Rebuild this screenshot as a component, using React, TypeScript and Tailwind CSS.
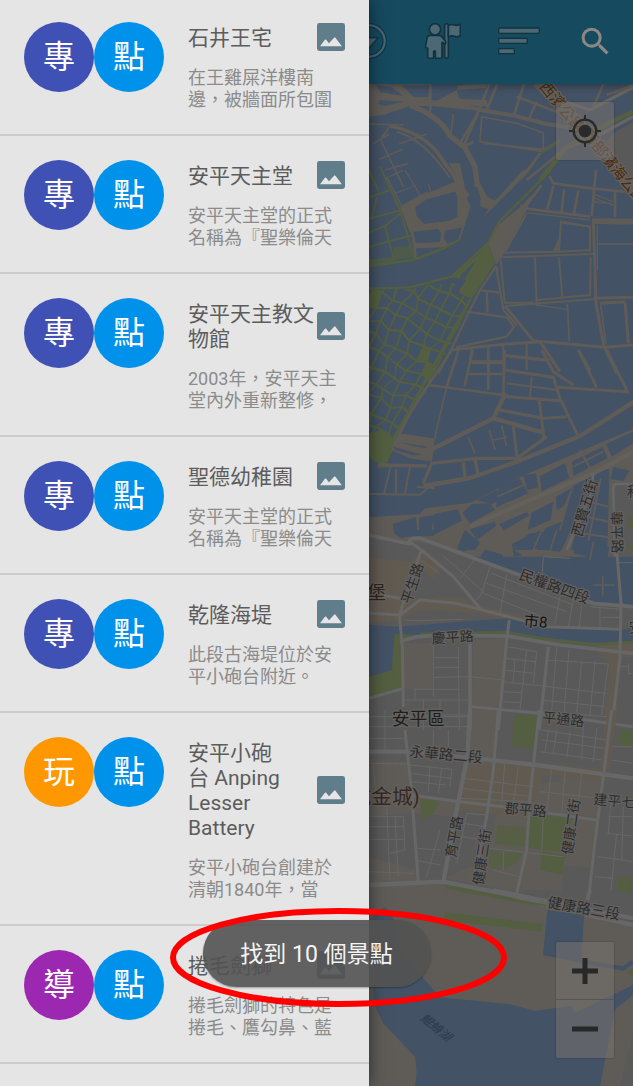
import React from "react";

type Place = {
  kind: string;
  color: string;
  title: string[];
  text: string[];
};

const INDIGO = "bg-[#3f51b5]";
const ORANGE = "bg-[#ff9800]";
const PURPLE = "bg-[#9c27b0]";

const places: Place[] = [
  { kind: "專", color: INDIGO, title: ["石井王宅"], text: ["在王雞屎洋樓南", "邊，被牆面所包圍"] },
  { kind: "專", color: INDIGO, title: ["安平天主堂"], text: ["安平天主堂的正式", "名稱為『聖樂倫天"] },
  { kind: "專", color: INDIGO, title: ["安平天主教文", "物館"], text: ["2003年，安平天主", "堂內外重新整修，"] },
  { kind: "專", color: INDIGO, title: ["聖德幼稚園"], text: ["安平天主堂的正式", "名稱為『聖樂倫天"] },
  { kind: "專", color: INDIGO, title: ["乾隆海堤"], text: ["此段古海堤位於安", "平小砲台附近。"] },
  { kind: "玩", color: ORANGE, title: ["安平小砲", "台 Anping", "Lesser", "Battery"], text: ["安平小砲台創建於", "清朝1840年，當"] },
  { kind: "導", color: PURPLE, title: ["捲毛劍獅"], text: ["捲毛劍獅的特色是", "捲毛、鷹勾鼻、藍"] },
];

function Badge({ label, color }: { label: string; color: string }) {
  return (
    <span className={`flex size-[70px] shrink-0 items-center justify-center rounded-full text-[32px] leading-none text-white ${color}`}>
      {label}
    </span>
  );
}

function PhotoIcon() {
  return (
    <svg viewBox="0 0 82 82" className="size-7 shrink-0" aria-hidden="true">
      <rect width="82" height="82" rx="7" fill="#607d8b" />
      <path d="M9 68 L23 49 Q25 47 27 49 L35 59 L50 43 Q52 41 54 43 L73 68Z" fill="#e5e5e5" />
    </svg>
  );
}

function PlaceRow({ place }: { place: Place }) {
  return (
    <li className="flex gap-6 border-b-2 border-[#cccccc] px-6 py-6 first:pt-[22px]">
      <div className="flex shrink-0">
        <Badge label={place.kind} color={place.color} />
        <Badge label="點" color="bg-[#0091ea]" />
      </div>
      <div className="min-w-0 flex-1 pt-px whitespace-nowrap">
        <div className="flex items-center justify-between">
          <h2 className="w-0 pt-[3px] text-[21px] leading-[25px] text-[#5c5c5c]">
            {place.title.map((line) => (
              <span key={line} className="block">{line}</span>
            ))}
          </h2>
          <PhotoIcon />
        </div>
        <p className="mt-4 -mb-px text-[18px] leading-[22px] text-[#8b8b8b]">
          {place.text.map((line) => (
            <span key={line} className="block">{line}</span>
          ))}
        </p>
      </div>
    </li>
  );
}

function Toolbar() {
  return (
    <header className="relative z-10 flex h-[84px] items-center justify-end gap-[37px] overflow-hidden bg-[#164a5f] pr-[19px] pb-0.5 shadow-[0_2px_8px_rgba(0,0,0,0.35)]">
      <button className="shrink-0" aria-label="方位">
        <svg viewBox="0 0 108 108" className="size-9">
          <circle cx="51" cy="54" r="47" fill="none" stroke="#10394a" strokeWidth="14" />
          <circle cx="51" cy="54" r="47" fill="none" stroke="#4b6874" strokeWidth="6" />
          <path d="M10 44 H79 L44 84Z" fill="#4b6874" stroke="#10394a" strokeWidth="5" />
        </svg>
      </button>
      <button className="shrink-0" aria-label="導覽">
        <svg viewBox="0 0 108 108" className="size-9">
          <g fill="#4b6874" stroke="#10333f" strokeWidth="5" strokeLinejoin="round">
            <path d="M59 8 Q59 2 64 2 Q70 2 70 8 V100 Q70 106 64 106 Q59 106 59 100Z" />
            <path d="M70 8 Q80 2 88 6 Q96 9 106 4 V38 Q96 44 88 40 Q80 37 70 42Z" />
            <path d="M14 37 H43 Q49 37 52 43 L61 55 Q64 60 60 63 L51 58 V101 Q51 106 46 106 H35 Q31 106 31 101 V84 H26 V101 Q26 106 21 106 H13 Q8 106 8 101 V76 L4 74 Q1 72 2 68 L6 45 Q8 37 14 37Z" />
            <circle cx="30" cy="19" r="17" />
          </g>
        </svg>
      </button>
      <button className="shrink-0" aria-label="排序">
        <svg viewBox="0 0 126 84" className="h-7 w-[42px]">
          <g fill="#4b6874" stroke="#10333f" strokeWidth="4">
            <rect x="2" y="3" width="122" height="16" rx="3" />
            <rect x="2" y="34" width="86" height="15" rx="3" />
            <rect x="2" y="65" width="47" height="15" rx="3" />
          </g>
        </svg>
      </button>
      <button className="shrink-0" aria-label="搜尋">
        <svg viewBox="0 0 24 24" className="size-[37px]" fill="#8a8785">
          <path d="M15.5 14h-.79l-.28-.27A6.471 6.471 0 0 0 16 9.5 6.5 6.5 0 1 0 9.5 16c1.61 0 3.09-.59 4.23-1.57l.27.28v.79l5 4.99L20.49 19l-4.99-5zm-6 0C7.01 14 5 11.99 5 9.5S7.01 5 9.5 5 14 7.01 14 9.5 11.99 14 9.5 14z" />
        </svg>
      </button>
    </header>
  );
}

const WATER = "#435265";
const LAND = "#5f5c58";
const CITY = "#595959";
const ROAD = "#676767";
const GREEN = "#535f40";
const TAN = "#615a51";

// Irregular fish ponds laid along the slanted embankment.
function pondCells(): string[] {
  const cells: string[] = [];
  const noise = (i: number, j: number) => {
    const v = Math.sin(i * 127.1 + j * 311.7) * 43758.5453;
    return v - Math.floor(v);
  };
  const corner = (i: number, j: number): [number, number] => {
    const a = i * 42 + noise(i, j) * 24;
    const b = j * 36 + noise(j + 40, i) * 20;
    return [330 - 0.46 * a - 0.87 * b, 860 + 0.87 * a - 0.42 * b];
  };
  for (let i = -2; i < 18; i++) {
    for (let j = -3; j < 15; j++) {
      if (noise(i + 9, j + 3) < 0.05) continue;
      const pts = [corner(i, j), corner(i + 1, j), corner(i + 1, j + 1), corner(i, j + 1)];
      const cx = pts.reduce((s, p) => s + p[0], 0) / 4;
      const cy = pts.reduce((s, p) => s + p[1], 0) / 4;
      cells.push(
        pts.map(([x, y]) => `${(cx + (x - cx) * 0.84).toFixed(1)},${(cy + (y - cy) * 0.84).toFixed(1)}`).join(" "),
      );
    }
  }
  return cells;
}

const cells = pondCells();

function Lines({ d, w, c = LAND }: { d: string; w: number; c?: string }) {
  return <path d={d} fill="none" stroke={c} strokeWidth={w} strokeLinejoin="round" />;
}

function Label({ x, y, r = 0, s = 42, c = "#2d2d2d", children }: { x: number; y: number; r?: number; s?: number; c?: string; children: string }) {
  return (
    <text
      x={x}
      y={y}
      transform={`rotate(${r} ${x} ${y})`}
      fontSize={s}
      fill={c}
      stroke="#646260"
      strokeWidth="7"
      strokeLinejoin="round"
      paintOrder="stroke"
      textAnchor="middle"
      dominantBaseline="central"
    >
      {children}
    </text>
  );
}

function CityMap() {
  return (
    <svg viewBox="27 252 792 3006" preserveAspectRatio="xMinYMin slice" className="absolute inset-0 size-full" role="img" aria-label="安平區地圖">
      <defs>
        <clipPath id="ponds">
          <path d="M27 868 L150 866 L275 838 L300 880 L335 897 L270 1040 L150 1240 L90 1370 L70 1410 L27 1370Z" />
        </clipPath>
      </defs>
      <rect x="27" y="252" width="792" height="3006" fill={WATER} />

      {/* northern ponds */}
      <g>
        <path d="M27 252 H215 V300 L330 310 L330 330 L215 318 L150 318 L70 345 L27 350Z" fill={LAND} />
        <path d="M50 256 L95 262 L130 288 L60 276Z M125 256 L208 256 L205 292 L160 290Z M60 300 L130 305 L75 318 L55 312Z" fill={WATER} />
        <path d="M292 256 L380 252 L378 264 L292 270Z M290 270 L298 296 L380 300 L385 320 L220 308Z" fill={LAND} />
        <Lines w={16} d="M150 316 Q240 350 268 405 L315 443 L345 500 L352 560" />
        <Lines w={12} d="M215 312 L330 322 L380 334 L460 346 L560 372 L625 382" />
        <Lines w={8} d="M212 318 L208 345 M310 440 L345 360 L388 252 M300 430 L350 345 M380 330 L412 252 M462 345 L492 252 M470 290 L590 335 M505 360 L530 305" />
        <Lines w={5} d="M273 400 L280 342 M27 372 L132 375 M90 378 L60 420 M38 432 L88 402 M58 478 L128 448 M75 510 L145 490 M118 432 L200 402 M62 420 L130 560 M365 350 L360 425 L550 455 L550 398 L470 370 Z M372 430 L550 448 M550 450 L600 420" />
        <Lines w={11} d="M90 378 Q180 395 230 455 L290 540 L325 590" />
        <Lines w={6} d="M110 395 Q190 415 275 540" />
        <Lines w={9} d="M340 425 L312 440" />
        <Lines w={14} c={GREEN} d="M819 335 L745 370 L620 442 L540 540" />
        <Lines w={6} c={GREEN} d="M600 425 L540 462 L478 535" />
        <Lines w={8} d="M819 350 L735 395 L610 450 L500 540 M540 460 L505 510" />
        <path d="M819 365 L760 400 L725 440 L819 560Z" fill={CITY} />
        <Lines w={34} d="M530 245 L620 330 L730 460 L830 590" />
        <Lines w={10} c="#686561" d="M600 300 L690 330 L819 262 M690 420 L819 350" />
        <Lines w={8} d="M700 322 L730 252 M740 285 L819 256" />
      </g>

      {/* river bend and large ponds */}
      <g transform="translate(0 510)">
        <path d="M120 110 L175 78 L290 20 L265 -20 L300 -20 L322 90 L332 108 L300 212 L165 270 L155 200Z" fill={LAND} />
        <path d="M165 112 L200 88 L285 65 L292 80 V140 L270 152 L192 162 L170 138Z M160 185 L235 177 L243 190 L240 216 L168 220Z M254 182 L307 172 L295 210 L262 222 L252 205Z M168 235 L255 232 L170 263Z M185 60 L205 68 L285 35 L275 20Z" fill={WATER} />
        <path d="M335 -6 L382 80 L405 92 L490 0 H512 L370 142 L385 118 L360 108 L362 85Z M484 108 L520 70 L500 120 L430 255 L408 285 L385 220 L415 165Z" fill={LAND} />
        <path d="M385 218 L405 280 L335 387 L290 372 L318 330 L275 320 L345 262Z" fill={GREEN} />
        <path d="M300 317 L347 273 L325 310 L306 332Z" fill={WATER} />
        <Lines w={7} c={GREEN} d="M572 0 L415 158 L385 218 L275 320 L150 352 L27 356 M27 288 L160 270 L250 236 L300 208" />
        <Lines w={6} c={GREEN} d="M60 -10 L120 120 L165 270 M27 82 L92 60 M27 145 L118 122 M27 188 L75 168 L122 130 M75 168 L102 272 M27 230 L155 196 M27 0 L55 62 M50 82 L35 150" />
        <Lines w={4} d="M88 20 L130 0 M105 70 L170 45 M135 0 L180 75 M80 20 L125 110 M205 40 L212 65" />
        <path d="M27 268 L100 262 L105 275 L27 286Z M100 232 L150 225 L160 262 L102 270Z" fill={GREEN} opacity="0.7" />
        <Lines w={8} d="M568 18 L580 40 L695 55 L819 68 M500 116 L690 140 M545 45 L498 108 M562 118 L580 48 M605 125 L612 58 M642 132 L655 62 M695 138 L708 0 M765 140 V65" />
        <Lines w={4} d="M702 72 L760 96 M702 84 L760 106 M702 96 L755 100 M480 105 L500 122 M500 128 L690 150 M610 160 L690 170 M710 222 H819 M712 300 V165 M530 405 L620 418" />
        <path d="M695 145 L819 146 V164 L700 162Z M595 205 L600 248 L578 246Z" fill={LAND} />
        <Lines w={6} d="M500 130 L434 248 L595 245 L692 240 M603 152 L597 245 M606 155 L690 170 V245 M418 262 L700 252 M422 268 L434 398 L520 398 M525 262 L530 408 M597 262 L607 382 M532 390 L690 375 L692 262 M436 408 L700 388" />
        <Lines w={9} d="M700 150 L708 400 L732 530 M700 385 L819 382 M435 408 L520 512 L735 532 L819 525 M795 395 L805 520 M720 400 L795 395" />
        <Lines w={5} d="M622 402 L628 514 M722 405 L738 520" />
        <Lines w={7} d="M408 288 L430 420 L470 465 M408 288 L360 360 L325 430 L278 530 L235 610 M360 360 L418 368 M380 362 L383 428 M320 425 L440 442 L462 470 L440 500 L288 532" />
        <Lines w={9} d="M270 540 L440 522 L540 515 L600 605 M655 540 L690 600 M735 535 L770 610" />
        <Lines w={6} d="M335 535 L325 600 M385 530 V600 M430 520 V600 M335 580 H430 M500 520 V600 M436 555 L575 570 M295 540 L275 600" />
      </g>

      {/* village ponds */}
      <g clipPath="url(#ponds)">
        <rect x="27" y="850" width="340" height="600" fill={GREEN} />
        {cells.map((points) => (
          <polygon key={points} points={points} fill={WATER} />
        ))}
        <path d="M335 890 L55 1400" stroke={GREEN} strokeWidth="9" fill="none" />
        <path d="M27 1300 L70 1290 L110 1330 L75 1400 L27 1370Z" fill={GREEN} />
      </g>

      {/* canal and south bank */}
      <g transform="translate(0 1050)">
        <path d="M118 250 L220 265 L222 300 L215 335 L150 325 L95 300 L100 275Z" fill={LAND} />
        <path d="M100 290 L190 315 L160 316 L105 300Z M110 276 L205 290 L190 294Z" fill={WATER} />
        <Lines w={8} d="M275 0 L205 105 L150 190 L118 252 M205 105 L430 135 L434 0 M338 0 L314 108 M385 0 V120 M325 72 H432 M327 35 H432 M290 20 L260 110" />
        <Lines w={5} d="M260 110 L218 290 M325 262 L345 310 M388 240 L405 300 M425 225 L440 290 M400 270 L440 262" />
        <Lines w={13} d="M212 300 L400 205 L437 130 M400 205 L550 248 M190 408 L330 384 L470 335 L660 258 L830 150" />
        <Lines w={10} d="M55 345 L200 348 M190 400 L215 340 L350 325 L470 325 L560 260 M55 350 L75 340 M345 325 L355 378 M310 338 L316 388" />
        <Lines w={6} d="M27 432 L180 434 L215 405 M92 350 L72 430 M108 358 V430 M150 350 L135 430 M170 410 L225 415" />
        <Lines w={9} d="M435 60 L580 82 L600 145 L655 260 M440 140 L600 152 M538 150 L552 265 M418 180 L550 205 L620 200 M592 112 L800 125 M545 0 L580 65 L640 105 M655 0 L710 112 M740 0 L805 130 M460 230 L472 330" />
        <Lines w={6} d="M440 100 L592 120 M515 80 L510 142 M434 18 L560 32 M500 0 V60" />
        <path d="M27 502 L180 492 L195 475 L330 458 L500 372 L690 292 L830 232 V620 H27Z" fill={LAND} />
        <g fill={WATER}>
          <path d="M350 450 L410 420 L428 450 L395 462Z M416 414 L478 385 L505 430 L408 472Z M490 376 L528 370 L535 412 L502 420Z M540 378 L615 340 L628 385 L545 424Z M636 335 L728 290 L742 325 L640 378Z M738 282 L819 245 V280 L755 320Z" />
          <path d="M308 490 L335 462 L390 460 L405 480 L330 520Z M222 492 L295 478 L305 512 L220 555Z M98 522 L168 502 L172 548 L125 565 L102 548Z M178 502 L225 496 L212 548 L176 555Z M330 538 L405 515 L408 528 L350 570Z M292 600 L315 540 L360 578 L345 600Z M515 488 L580 455 L572 510 L503 540Z M588 440 L635 415 L612 468 L590 482Z M418 522 L500 487 L508 496 L432 542Z" />
          <path d="M455 582 L545 540 L520 600 H460Z M555 535 L605 515 L575 600 H530Z M640 408 L705 372 L690 410 L605 600 H585Z M705 370 L748 356 L742 600 H632Z M760 350 L808 362 L790 392 L752 388Z" />
        </g>
        <Lines w={6} d="M722 385 L680 600 M690 455 L745 470 M680 500 L745 515 M665 550 L745 562 M660 300 L690 355 M640 350 L730 305 M412 440 L490 405" />
        <Lines w={13} c="#64615d" d="M330 530 L510 450 L700 370 L830 300" />
        <path d="M760 402 H830 V620 H750Z" fill={CITY} />
        <Lines w={8} c={ROAD} d="M830 402 H768 Q758 402 760 420 L765 620 M700 370 L690 440 L620 600" />
        <path d="M805 500 H819 V535 H805Z M805 580 H819 V600 H805Z" fill={GREEN} />
      </g>

      {/* city north of the canal */}
      <g transform="translate(0 1590)">
        <path d="M27 10 L150 35 L200 40 L470 130 L700 220 L830 230 V1700 H27Z" fill={CITY} />
        <g fill={WATER}>
          <path d="M100 8 L125 0 H228 L220 18 L150 20 L120 22Z M293 50 L312 5 L355 45 L310 65Z M375 58 L430 75 L420 105 L360 85Z M432 85 L470 105 L460 120 L425 108Z M458 58 L487 76 L462 80Z M470 40 L510 10 L600 0 H630 L600 65 L520 55Z M645 20 L748 52 L740 95 L640 70Z M645 85 L690 95 V180 L650 150Z M698 95 L752 105 L750 128 L698 125Z M698 138 L765 138 V203 L700 190Z" />
        </g>
        <Lines w={5} d="M545 0 L520 60 M590 0 L570 62 M700 35 L690 90 M728 138 V200 M698 165 H765" />
        <path d="M27 80 L150 95 L190 60 L248 95 L222 150 L182 118 L150 205 L300 200 L360 225 L500 262 V290 L360 250 L180 240 L120 270 L27 278Z M715 345 L830 338 V380 L785 385 L765 620 H730 L750 400 L715 372Z" fill={TAN} />
        <path d="M130 340 H220 L215 478 H132Z M340 330 L435 325 L425 530 L335 530Z M335 540 L410 550 L400 740 L320 720Z" fill={LAND} />
        <path d="M27 285 L120 290 L300 275 L450 265 L560 295 L780 300 L830 290 V338 L700 338 L560 325 L440 308 L110 315 L100 422 L27 442Z" fill={WATER} />
        <path d="M27 440 L95 420 L103 312 L190 316 L120 340 L130 472 L27 502Z" fill={GREEN} />
        <Lines w={9} c={GREEN} d="M180 312 L440 307 L560 328 L700 343 L819 337" />
        <Lines w={3} c={ROAD} d="M250 78 L370 185 L350 210 M300 145 L345 88 M390 110 L365 190 M440 135 L420 250 M395 130 L640 225 M380 160 L620 245 M370 190 L560 265 M480 135 L640 190 M550 80 L545 150 M550 80 L630 85 M600 200 L585 280 M640 205 L625 290 M665 225 L658 290 M720 230 V295 M690 230 L780 238 M725 262 H780 M240 130 L180 90 M130 270 L170 272 L310 268 M775 98 H819" />
        <Lines w={3} c={ROAD} d="M220 340 V500 M295 350 L298 600 M220 383 H298 M220 412 H298 M220 442 L330 440 L430 450 M160 478 H298 M135 510 H325 M190 510 V600 M240 510 V600 M130 555 H330 M165 480 V510 M440 350 L530 365 L520 460 M435 385 L525 395 M430 420 L520 430 M430 455 L740 490 M465 385 L460 455 M500 360 L480 540 M430 485 L485 488 M430 515 L480 518 M560 390 L745 402 M590 350 L575 545 M627 360 L612 550 M665 395 L650 548 M705 395 L690 555 M745 400 L725 555 M545 510 L735 530 M540 545 L740 560 M805 400 V430 H819 M780 410 H805" />
        <Lines w={11} c={ROAD} d="M27 15 L150 42 Q140 22 180 25 L470 132 L700 220 L819 230 M120 335 Q170 315 240 316 L440 318 L600 345 L819 370 M330 340 V600" />
        <Lines w={9} c={ROAD} d="M150 35 L190 65 L280 140 L360 235 M182 65 L118 255 L127 350 L130 530 M27 250 L120 255 L180 210 L290 220 L360 238 L560 290 L780 298 M448 270 L440 330 L415 600 M770 60 L783 220 L780 380 L755 600 M565 350 L538 600 M27 190 L120 205 M130 475 L27 505 M335 530 L540 550 L819 590" />
        <path d="M465 555 L538 560 L535 600 H460Z" fill={GREEN} />
      </g>

      {/* city centre */}
      <g transform="translate(0 2130)">
        <path d="M27 150 L145 155 L150 250 L300 275 L290 320 L150 310 L27 320Z M27 440 L170 480 L175 520 H27Z M340 0 H410 L400 140 H330Z M27 525 L250 515 L450 555 L560 590 L819 650 V1200 H27Z M410 300 L710 330 L690 470 L610 560 L470 545 L255 505 L330 470 L380 470Z M540 195 L725 200 L712 320 L515 300Z" fill={LAND} />
        <path d="M285 300 L310 180 L400 150 L720 175 L745 0 H772 L748 190 L735 210 L540 200 L525 295 L410 312Z" fill={TAN} />
        <path d="M545 197 L600 195 L600 215 L545 218Z M612 465 L690 475 L685 570 L605 560Z" fill={CITY} />
        <g fill={GREEN}>
          <path d="M465 15 L537 18 L527 120 L455 105Z M180 266 L235 272 Q230 318 185 328Z M510 312 L638 325 L598 425 L500 412Z M548 425 L615 435 L607 493 L540 480Z M780 60 H819 V110 L778 105Z M775 498 L815 503 V552 L772 547Z M255 525 L400 542 L560 580 L555 592 L260 537Z" />
          <path d="M415 345 L495 352 L493 412 L405 402Z M390 420 L487 430 Q460 490 385 472Z" opacity="0.75" />
        </g>
        <Lines w={3} c={ROAD} d="M27 85 H135 M27 50 H325 M27 20 H325 M75 0 V120 M220 60 V120 M265 60 V120 M27 160 L140 162 M150 165 L275 178 L270 230 M150 190 L275 205 M150 215 L260 225 M210 170 L205 245 M245 175 L235 250 M27 320 H130 L135 420 L90 430 M80 290 L90 510 M27 350 H130 M27 388 H130 M40 160 L50 290 M27 485 L165 490 M105 320 L115 500 M320 310 L380 315 M310 340 L375 350 M305 380 L370 390 M240 360 L200 500 M170 415 L240 420 M320 310 L290 460 M165 450 L240 465 M310 205 L520 230 M305 235 L515 260 M300 265 L510 275 M475 170 L460 285 M435 150 L425 280" />
        <Lines w={3} c={ROAD} d="M545 60 L740 90 M545 90 L735 115 M540 125 L725 150 M590 60 L580 130 M630 65 L620 140 M565 60 L555 125 M670 45 L665 150 M710 55 L700 155 M575 170 L560 310 M615 180 L605 320 M665 190 L650 320 M540 245 L720 265 M390 415 L610 440 M430 425 V480 M400 480 L475 500 M550 310 L545 420 M755 250 L745 370 M745 320 H819 M740 370 L819 378 M715 440 L819 455 M770 370 L750 570 M790 290 L785 450 M705 500 L760 505 M760 110 H819 M755 150 L819 160" />
        <Lines w={13} c={ROAD} d="M27 125 L140 125 L320 142 L530 165 L819 205 M330 0 L322 140 L290 300 L250 515" />
        <Lines w={9} c={ROAD} d="M135 60 L155 250 L175 515 M155 255 L300 275 L430 290 L710 330 M415 0 L400 180 L380 320 L340 520 M538 0 L510 260 L500 420 L470 550 M755 0 L730 200 L702 420 L685 575" />
        <Lines w={13} c={ROAD} d="M27 525 L250 515 L450 555 L570 590 L819 645" />
      </g>

      {/* lake */}
      <g transform="translate(0 2670)">
        <path d="M480 0 H819 V85 L560 32Z" fill={CITY} />
        <path d="M40 65 L78 52 L100 85 L120 180 L190 265 L240 322 L450 343 L525 362 L635 348 L645 368 L819 285 V315 L765 358 L720 588 H165 L170 545 L165 500 L70 400 L40 340Z" fill={WATER} />
        <path d="M562 60 L672 75 L664 220 L549 195Z" fill={WATER} />
        <Lines w={13} c={WATER} d="M662 215 L790 235 L819 215" />
        <path d="M819 430 L780 588 H819Z" fill={CITY} />
        <path d="M252 66 L548 102 L545 125 L255 90Z M803 245 L819 235 V265Z M772 0 H815 V12Z" fill={GREEN} />
        <Lines w={6} c={GREEN} d="M300 0 L560 47" />
        <Lines w={12} c={ROAD} d="M400 0 L570 35 L819 85 M690 0 L682 30" />
      </g>

      {/* place and street names */}
      <g>
        <Label x={606} y={322} r={51} s={46} c="#4b2b0e">西濱公路</Label>
        <Label x={762} y={500} r={51} s={46} c="#4b2b0e">西部濱海公路</Label>
        <Label x={674} y={1524} r={-74} s={44}>西賢五街</Label>
        <Label x={770} y={1597} r={88}>華平路</Label>
        <Label x={821} y={1472}>和</Label>
        <Label x={157} y={1750} r={-72}>平生路</Label>
        <Label x={50} y={1779} s={56} c="#2f241b">堡</Label>
        <Label x={583} y={1760} r={20} s={44}>民權路四段</Label>
        <Label x={527} y={1866} r={5} s={46} c="#141414">市8</Label>
        <Label x={278} y={1912} r={-4}>慶平路</Label>
        <Label x={175} y={2156} s={53} c="#211d19">安平區</Label>
        <Label x={610} y={2158} r={6}>平通路</Label>
        <Label x={827} y={1882}>安</Label>
        <Label x={258} y={2264} r={5} s={44}>永華路二段</Label>
        <Label x={34} y={2391} s={62} c="#38281d">(億載金城)</Label>
        <Label x={497} y={2430} r={5}>郡平路</Label>
        <Label x={282} y={2510} r={-80}>育平路</Label>
        <Label x={366} y={2571} r={-82}>健康三街</Label>
        <Label x={633} y={2480} r={-82}>健康二街</Label>
        <Label x={784} y={2405} r={5}>建平七街</Label>
        <Label x={671} y={2725} r={10} s={44}>健康路三段</Label>
        <text x="228" y="3083" transform="rotate(40 228 3083)" fontSize="36" fontStyle="italic" fill="#2b3950" textAnchor="middle" dominantBaseline="central">鯤鯓湖</text>
      </g>
    </svg>
  );
}

export default function App() {
  return (
    <div lang="zh-Hant" className="relative flex min-h-screen overflow-hidden bg-[#5f5c58] font-[Roboto,'Noto_Sans_CJK_TC',sans-serif]">
      <aside className="z-20 w-[369px] shrink-0 bg-[#e5e5e5] shadow-[0_0_16px_rgba(0,0,0,0.55)]">
        <ul>
          {places.map((place) => (
            <PlaceRow key={place.title.join("")} place={place} />
          ))}
        </ul>
      </aside>

      <main className="flex min-w-0 flex-1 flex-col">
        <Toolbar />
        <section className="relative flex flex-1 flex-col items-end justify-between overflow-hidden pt-[18px] pr-[19px] pb-7">
          <CityMap />
          <button className="relative flex size-[58px] items-center justify-center rounded-xs bg-[#74706c]/60 shadow-[0_0_2px_rgba(0,0,0,0.35)]" aria-label="定位">
            <svg viewBox="0 0 96 96" className="size-8">
              <circle cx="48" cy="48" r="34" fill="none" stroke="#2a2a2a" strokeWidth="7" />
              <circle cx="48" cy="48" r="19" fill="#2a2a2a" />
              <path d="M48 0 V18 M48 78 V96 M0 48 H18 M78 48 H96" stroke="#2a2a2a" strokeWidth="6" />
            </svg>
          </button>
          <div className="relative flex w-[58px] flex-col divide-y divide-[#545452] rounded-xs bg-[#74706c]/60 shadow-[0_0_2px_rgba(0,0,0,0.35)]">
            <button className="flex h-[58px] items-center justify-center" aria-label="放大">
              <svg viewBox="0 0 28 28" className="size-7" stroke="#282828" strokeWidth="5">
                <path d="M1 14 H27 M14 1 V27" />
              </svg>
            </button>
            <button className="flex h-[58px] items-center justify-center" aria-label="縮小">
              <svg viewBox="0 0 28 28" className="size-7" stroke="#282828" strokeWidth="5">
                <path d="M1 14 H27" />
              </svg>
            </button>
          </div>
        </section>
      </main>

      <div role="status" className="absolute bottom-[99px] left-1/2 z-30 flex h-[67px] -translate-x-1/2 items-center rounded-full bg-[#525252]/90 px-[38px] pt-1 text-[23px] whitespace-nowrap text-[#f4f4f4] shadow-[0_1px_2px_rgba(0,0,0,0.3)]">
        找到 10 個景點
      </div>
      <svg viewBox="0 0 338 99" className="pointer-events-none absolute bottom-[79px] left-[170px] z-40 h-[99px] w-[338px]" aria-hidden="true">
        <ellipse cx="168.5" cy="49.5" rx="165.5" ry="46.5" fill="none" stroke="#ff0000" strokeWidth="6" />
      </svg>
    </div>
  );
}
